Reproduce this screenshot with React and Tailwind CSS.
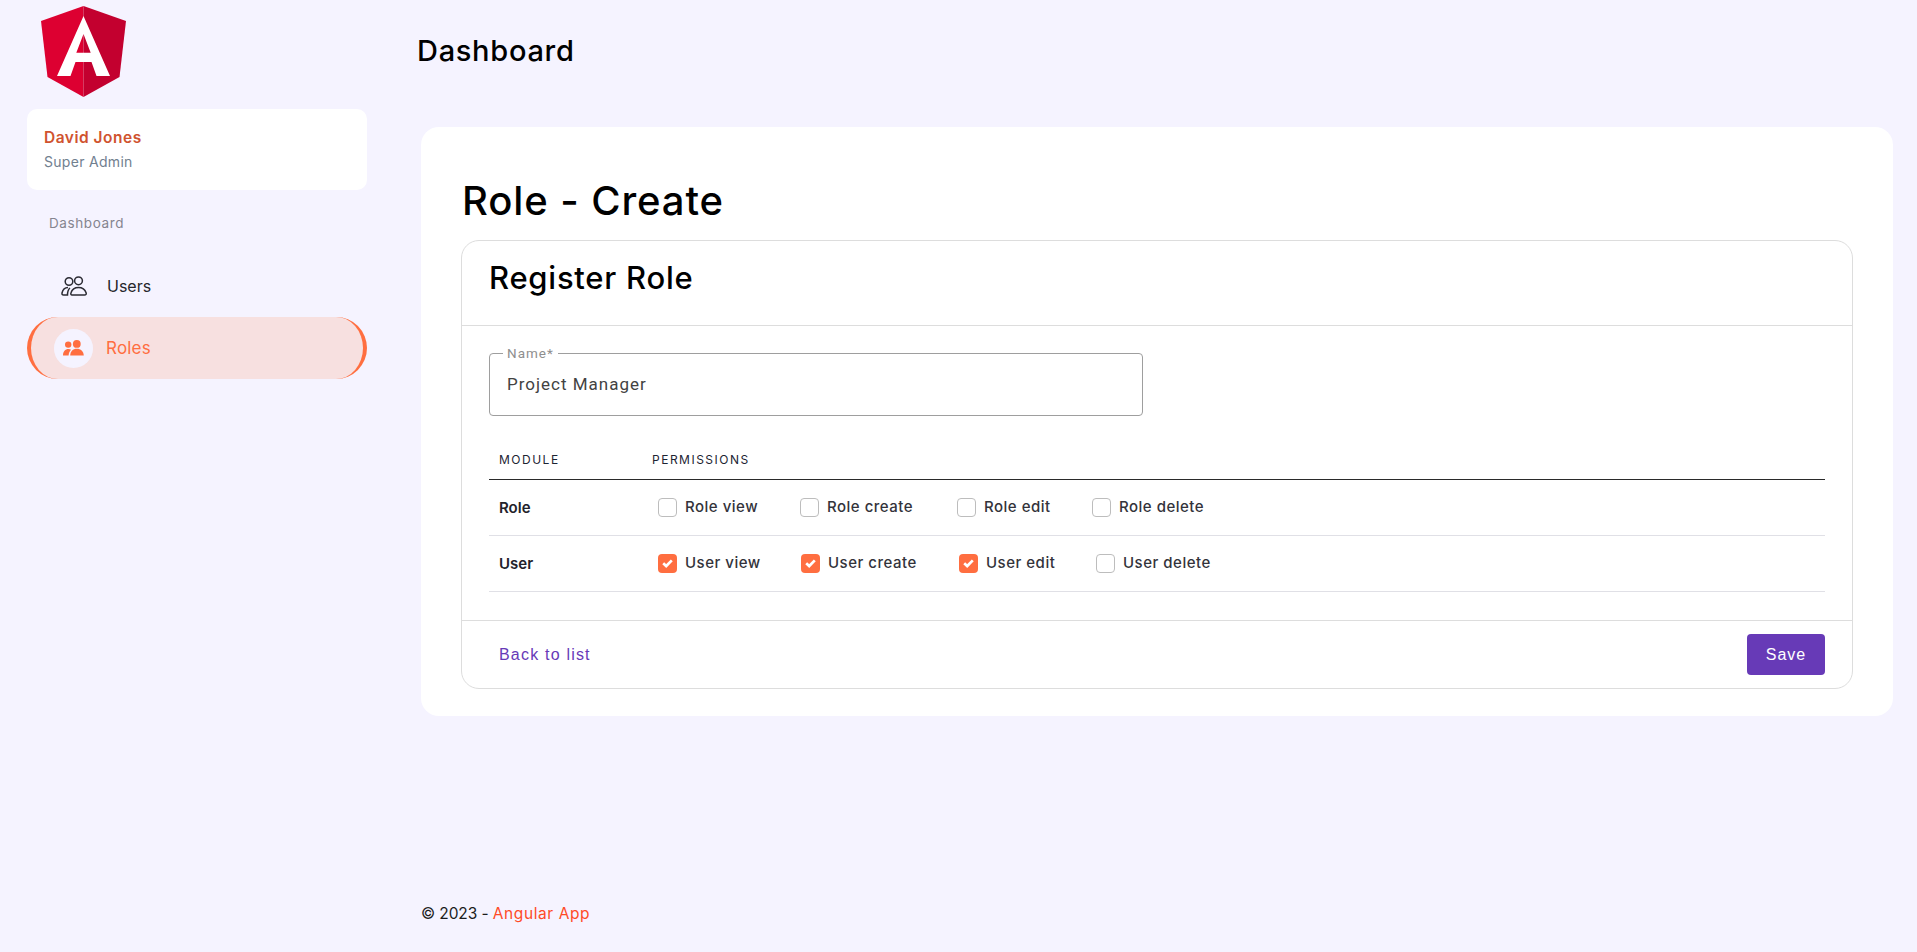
const poppins = "font-['Inter','Liberation_Sans',sans-serif]";

const rows = [
    {
        name: "Role",
        perms: [
            { label: "Role view", checked: false, w: "w-[142px]" },
            { label: "Role create", checked: false, w: "w-[157px]" },
            { label: "Role edit", checked: false, w: "w-[135px]" },
            { label: "Role delete", checked: false, w: "w-[140px]" },
        ],
    },
    {
        name: "User",
        perms: [
            { label: "User view", checked: true, w: "w-[143px]" },
            { label: "User create", checked: true, w: "w-[158px]" },
            { label: "User edit", checked: true, w: "w-[137px]" },
            { label: "User delete", checked: false, w: "w-[140px]" },
        ],
    },
];

function AngularLogo() {
    return (
        <svg width="85" height="91" viewBox="0 0 85 91">
            <polygon points="42.5,0 0,15 6.5,71 42.5,91" fill="#dd0031" />
            <polygon points="42.5,0 85,15 78.5,71 42.5,91" fill="#c3002f" />
            <path
                fill="#fff"
                d="M42.5 10 L16 70 H29.5 L34.5 56 H50.5 L55.5 70 H69 Z M49.7 46.7 H35.3 L42.5 28 Z"
                fillRule="evenodd"
            />
        </svg>
    );
}

function UsersOutline() {
    return (
        <svg width="26" height="20" viewBox="0 0 26 20" fill="none" stroke="#2b2b33" strokeWidth="1.5">
            <circle cx="8" cy="5.5" r="3.8" />
            <circle cx="17.5" cy="4.8" r="3.9" />
            <path d="M11 19 H18 h5.5 c1.5 0 2-1 1.6-2.2 C24 13.5 21 11.5 17.5 11.5 C14 11.5 11 13.5 10 16.8 C9.6 18 10 19 11 19 Z" />
            <path d="M7 11.5 C4 11.5 1.8 13.5 1 17 C.8 18.3 1.4 19 2.5 19 H6.5 C6.5 16 7 13.5 9 12" />
        </svg>
    );
}

function UsersFilled() {
    return (
        <svg width="21" height="16" viewBox="0 0 21 16" fill="#ff6e40">
            <circle cx="5.2" cy="4.6" r="3.2" />
            <circle cx="13.8" cy="3.9" r="3.9" />
            <path d="M0 15.5 C0 11.5 2.2 9 5.4 9 C6.6 9 7.4 9.3 8 9.8 C6.6 11.2 5.8 13 5.6 15.5 Z" />
            <path d="M7.2 15.5 C7.4 11.2 10 8.8 13.8 8.8 C17.8 8.8 20.4 11.2 20.8 15.5 Z" />
        </svg>
    );
}

function Checkbox({ checked }) {
    if (checked) {
        return (
            <span className="w-[19px] h-[19px] rounded-[4px] bg-[#ff6e40] flex items-center justify-center shrink-0">
                <svg width="11" height="9" viewBox="0 0 11 9" fill="none" stroke="#fff" strokeWidth="2.7">
                    <path d="M1.2 4.2 L4.2 7 L9.8 1.4" />
                </svg>
            </span>
        );
    }
    return <span className="w-[19px] h-[19px] rounded-[4px] bg-white border border-[#bdbdbd] shrink-0" />;
}

function Sidebar() {
    return (
        <aside className="w-[421px] shrink-0 pl-[27px] pt-[6px]">
            <div className="pl-[14px]">
                <AngularLogo />
            </div>
            <div className="w-[340px] h-[81px] mt-[12px] bg-white rounded-[10px] pl-[17px] pt-[19px]">
                <div className="text-[15.5px] leading-[20px] font-semibold tracking-[0.5px] text-[#d0532f]">David Jones</div>
                <div className="text-[14px] leading-[20px] mt-[4px] tracking-[0.3px] text-[#71808f]">Super Admin</div>
            </div>
            <div className="pl-[22px] mt-[24px] text-[13.5px] leading-[18px] tracking-[0.6px] text-[#85858f]">Dashboard</div>
            <div className="flex items-center h-[50px] mt-[29px] pl-[34px]">
                <UsersOutline />
                <span className="ml-[20px] text-[16px] text-[#26262c]">Users</span>
            </div>
            <div className="relative flex items-center w-[340px] h-[62px] mt-[6px] rounded-full bg-[#f7e0e0] border-x-4 border-[#ff6e40] pl-[23px]">
                <span className="w-[39px] h-[39px] rounded-full bg-[#f5f3ff] flex items-center justify-center">
                    <UsersFilled />
                </span>
                <span className="ml-[13px] pt-[2px] text-[17px] tracking-[0.2px] text-[#ff6e40]">Roles</span>
            </div>
        </aside>
    );
}

function PermissionRow({ row }) {
    return (
        <div className="flex items-center h-[56px] border-b border-[#e0e0e6]">
            <div className="w-[169px] pl-[10px] text-[15px] font-semibold text-[#22222a] pt-[2px]">{row.name}</div>
            {row.perms.map(perm => (
                <label key={perm.label} className={`${perm.w} flex items-center gap-[8px] text-[15px] text-[#33333b]`}>
                    <Checkbox checked={perm.checked} />
                    <span className="font-medium tracking-[0.5px]">{perm.label}</span>
                </label>
            ))}
        </div>
    );
}

export default function App() {
    return (
        <div className={`${poppins} flex min-h-[952px] bg-[#f5f3ff] text-black`}>
            <Sidebar />
            <main className="flex-1 pr-[24px] flex flex-col">
                <h1 className="text-[29px] leading-[40px] font-medium tracking-[0.7px] -ml-[4px] mt-[31px]">Dashboard</h1>
                <div className="h-[589px] mt-[56px] bg-white rounded-[18px] px-[40px] pt-[51px]">
                    <h2 className="text-[40px] leading-[46px] font-medium tracking-[0.9px] ml-px">Role - Create</h2>
                    <div className="h-[449px] mt-[16px] border border-[#dddddd] rounded-[18px] flex flex-col">
                        <div className="h-[85px] border-b border-[#dddddd] px-[27px] pb-[10px] flex items-center">
                            <h3 className="text-[31px] font-medium tracking-[0.75px]">Register Role</h3>
                        </div>
                        <div className="flex-1 px-[27px] pt-[27px]">
                            <div className="relative w-[654px] h-[63px] border border-[#9e9e9e] rounded-[4px] flex items-center pl-[17px] text-[17px] tracking-[1px] text-[#424242] font-['Roboto',sans-serif]">
                                Project Manager
                                <span className="absolute -top-[8px] left-[13px] bg-white px-[4px] text-[13.5px] leading-[14px] text-[#8e8e8e]">Name*</span>
                            </div>
                            <div className="flex items-center h-[49px] mt-[15px] pt-[9px] border-b border-[#2a2a2a] pl-[10px] text-[12px] tracking-[1.5px] text-[#1d2433]">
                                <span className="w-[153px]">MODULE</span>
                                <span>PERMISSIONS</span>
                            </div>
                            {rows.map(row => (
                                <PermissionRow key={row.name} row={row} />
                            ))}
                        </div>
                        <div className="h-[68px] border-t border-[#dddddd] px-[27px] flex items-center justify-between">
                            <a className="pl-[10px] text-[16px] tracking-[1.2px] text-[#673ab7] font-['Liberation_Sans',sans-serif]">Back to list</a>
                            <button className="w-[78px] h-[41px] rounded-[4px] bg-[#673ab7] text-white text-[16px] tracking-[1px] font-['Liberation_Sans',sans-serif]">Save</button>
                        </div>
                    </div>
                </div>
                <footer className="mt-[187px] text-[15.5px] leading-[22px] tracking-[-0.1px] text-[#1c1c1c]">
                    © 2023 - <span className="text-[#ff4a26] tracking-[0.6px]">Angular App</span>
                </footer>
            </main>
        </div>
    );
}
